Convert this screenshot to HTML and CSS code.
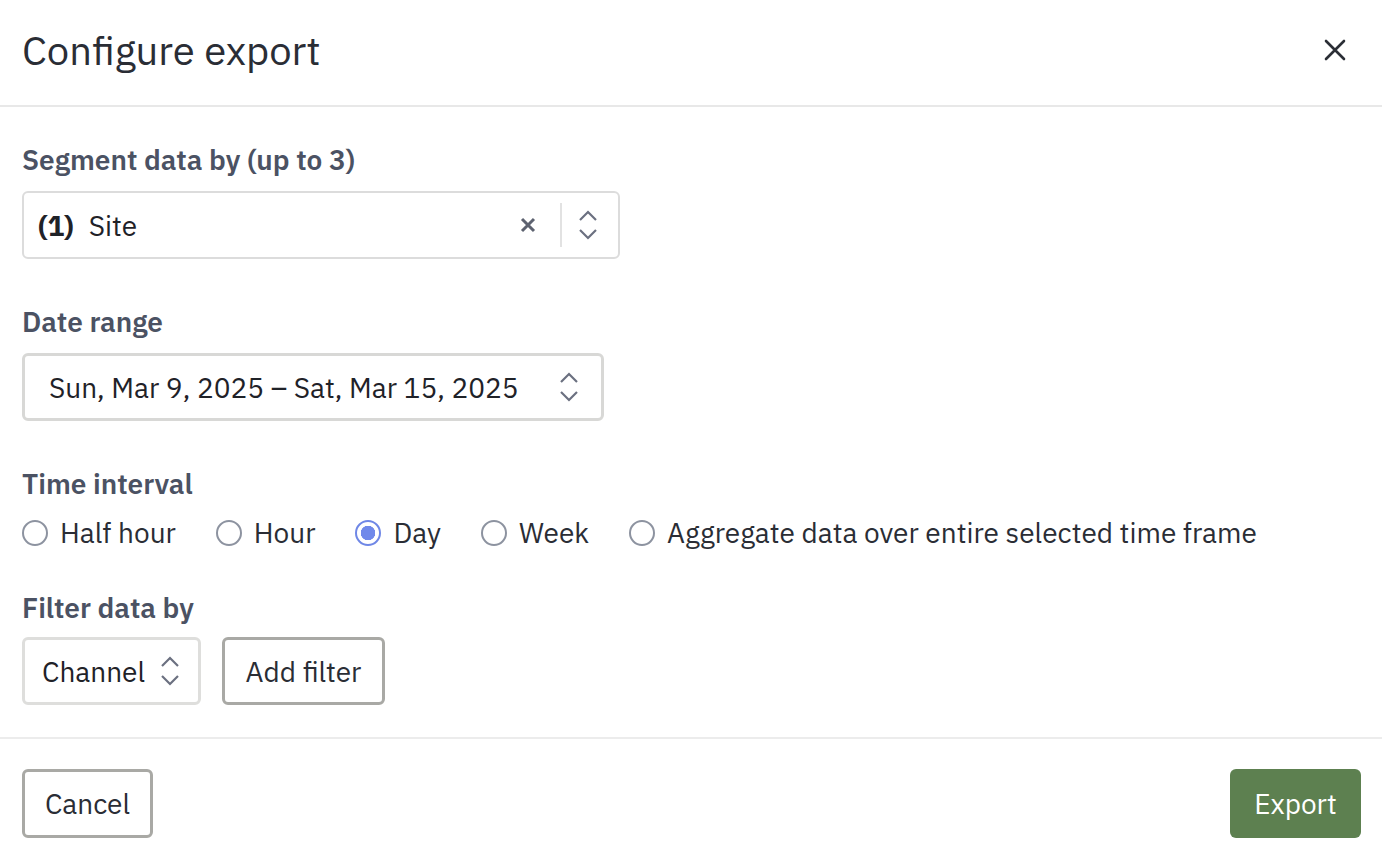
FILE: index.html
```html
<!DOCTYPE html>
<html lang="en">
<head>
    <meta charset="UTF-8">
    <meta name="viewport" content="width=device-width, initial-scale=1.0">
    <title>Configure export</title>
    <link rel="stylesheet" href="styles.css">
</head>
<body>
    <div class="modal">
        <div class="modal-header">
            <h1>Configure export</h1>
            <button class="close-btn" aria-label="Close">
                <svg width="22" height="22" viewBox="0 0 22 22"><path d="M2 2L20 20M20 2L2 20" stroke="#2b2e36" stroke-width="2.6" stroke-linecap="round"/></svg>
            </button>
        </div>

        <div class="modal-body">
            <div class="field">
                <label class="field-label">Segment data by (up to 3)</label>
                <div class="select segment-select">
                    <span class="select-value"><b>(1)</b>Site</span>
                    <span class="clear-icon">
                        <svg width="16" height="16" viewBox="0 0 16 16"><path d="M2 2L14 14M14 2L2 14" stroke="#5d6270" stroke-width="3"/></svg>
                    </span>
                    <span class="select-sep"></span>
                    <span class="chevrons">
                        <svg width="20" height="30" viewBox="0 0 20 30"><path d="M2 10L10 2L18 10M2 20L10 28L18 20" fill="none" stroke="#6b7080" stroke-width="2.2"/></svg>
                    </span>
                </div>
            </div>

            <div class="field">
                <label class="field-label">Date range</label>
                <div class="select date-select">
                    <span class="select-value">Sun, Mar 9, 2025 – Sat, Mar 15, 2025</span>
                    <span class="chevrons">
                        <svg width="20" height="30" viewBox="0 0 20 30"><path d="M2 10L10 2L18 10M2 20L10 28L18 20" fill="none" stroke="#6b7080" stroke-width="2.2"/></svg>
                    </span>
                </div>
            </div>

            <div class="field field-radios">
                <label class="field-label">Time interval</label>
                <div class="radio-row">
                    <label class="radio"><span class="radio-dot"></span>Half hour</label>
                    <label class="radio"><span class="radio-dot"></span>Hour</label>
                    <label class="radio"><span class="radio-dot checked"></span>Day</label>
                    <label class="radio"><span class="radio-dot"></span>Week</label>
                    <label class="radio"><span class="radio-dot"></span>Aggregate data over entire selected time frame</label>
                </div>
            </div>

            <div class="field field-last">
                <label class="field-label">Filter data by</label>
                <div class="filter-row">
                    <div class="select channel-select">
                        <span class="select-value">Channel</span>
                        <span class="chevrons">
                            <svg width="20" height="30" viewBox="0 0 20 30"><path d="M2 10L10 2L18 10M2 20L10 28L18 20" fill="none" stroke="#6b7080" stroke-width="2.2"/></svg>
                        </span>
                    </div>
                    <button class="btn btn-outline add-filter">Add filter</button>
                </div>
            </div>
        </div>

        <div class="modal-footer">
            <button class="btn btn-outline">Cancel</button>
            <button class="btn btn-primary">Export</button>
        </div>
    </div>
</body>
</html>
```

FILE: styles.css
```css
body {
    margin: 0;
    padding: 0;
    background: #fff;
    font-family: 'IBM Plex Sans', 'Roboto', 'Liberation Sans', sans-serif;
    color: #22252c;
}
.modal {
    width: 1382px;
    min-height: 862px;
    display: flex;
    flex-direction: column;
}
.modal-header {
    box-sizing: border-box;
    height: 107px;
    padding: 0 22px 6px;
    display: flex;
    align-items: center;
    justify-content: space-between;
    border-bottom: 2px solid #e8e8e8;
}
.modal-header h1 {
    margin: 0;
    font-size: 40px;
    font-weight: 400;
    color: #2a2d35;
}
.close-btn {
    border: none;
    background: none;
    padding: 0;
    margin-right: 14px;
    width: 22px;
    height: 22px;
    cursor: pointer;
}
.modal-body {
    padding: 36px 22px 32px;
    border-bottom: 2px solid #ececec;
}
.field {
    margin-bottom: 46px;
}
.field-radios {
    margin-bottom: 41px;
}
.field-last {
    margin-bottom: 0;
}
.field-label {
    display: block;
    font-size: 28px;
    line-height: 34px;
    font-weight: 600;
    color: #4b5263;
    margin-bottom: 14px;
}
.field-last .field-label {
    margin-bottom: 12px;
}
.select {
    box-sizing: border-box;
    height: 68px;
    border: 2px solid #dcdcdc;
    border-radius: 6px;
    display: flex;
    align-items: center;
    font-size: 28px;
    color: #1f2228;
}
.select-value {
    flex: 1;
    white-space: nowrap;
}
.select-value b {
    font-weight: 700;
    margin-right: 15px;
}
.segment-select {
    width: 598px;
    padding: 0 20px 0 14px;
}
.clear-icon {
    display: flex;
    margin-right: 24px;
}
.select-sep {
    width: 2px;
    height: 44px;
    background: #e2e2e2;
    margin-right: 16px;
}
.chevrons {
    display: flex;
}
.date-select {
    width: 582px;
    border-width: 3px;
    border-color: #d8d8d6;
    padding: 0 22px 0 24px;
}
.radio-row {
    display: flex;
    align-items: center;
    gap: 40px;
    margin-top: 15px;
}
.radio {
    display: flex;
    align-items: center;
    gap: 12px;
    font-size: 28px;
    line-height: 34px;
    color: #2a2d35;
}
.radio-dot {
    box-sizing: border-box;
    width: 26px;
    height: 26px;
    border: 2px solid #8d93a0;
    border-radius: 50%;
}
.radio-dot.checked {
    border-color: #6f87e6;
    background: radial-gradient(circle, #7089ea 0 7px, #fff 7.5px);
}
.filter-row {
    display: flex;
    gap: 21px;
}
.channel-select {
    width: 179px;
    padding: 0 18px 0 17px;
    border-width: 3px;
    border-color: #dededc;
}
.btn {
    box-sizing: border-box;
    height: 69px;
    border-radius: 6px;
    font-family: inherit;
    font-size: 28px;
    cursor: pointer;
    padding: 0;
}
.btn-outline {
    background: #fff;
    border: 3px solid #a9a9a5;
    color: #2a2d35;
}
.add-filter {
    width: 163px;
    height: 68px;
}
.modal-footer {
    display: flex;
    justify-content: space-between;
    padding: 30px 21px 0 22px;
}
.modal-footer .btn {
    width: 131px;
}
.btn-primary {
    background: #5d8050;
    border: none;
    color: #fff;
}
```
